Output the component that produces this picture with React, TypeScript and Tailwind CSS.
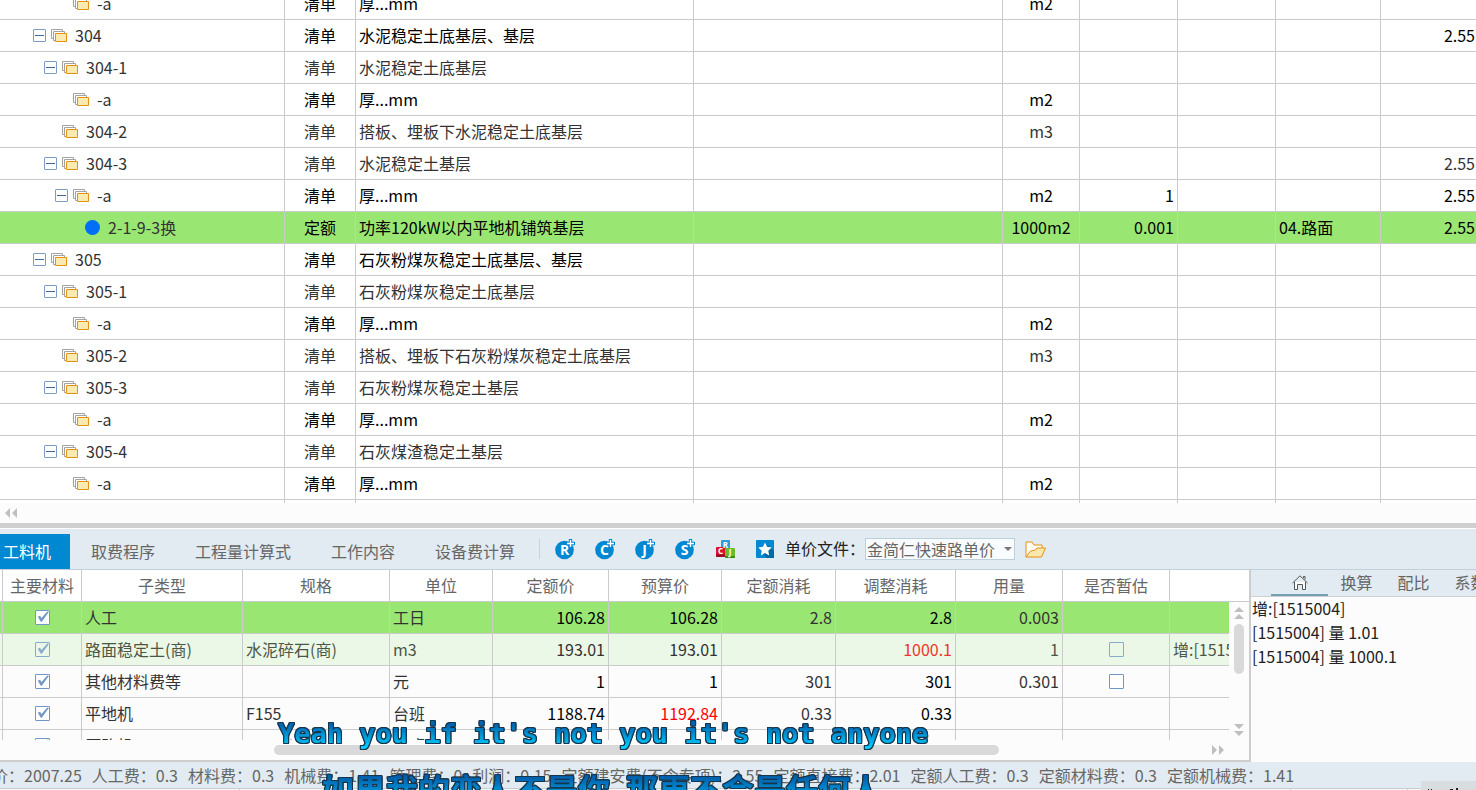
import React from 'react'

type BillRow = {
  level: 1 | 2 | 3 | 4
  open?: boolean
  code: string
  kind: string
  name: string
  unit?: string
  qty?: string
  fee?: string
  price?: string
}

const bills: BillRow[] = [
  { level: 3, code: '-a', kind: '清单', name: '厚...mm', unit: 'm2' },
  { level: 1, open: true, code: '304', kind: '清单', name: '水泥稳定土底基层、基层', price: '2.55' },
  { level: 2, open: true, code: '304-1', kind: '清单', name: '水泥稳定土底基层' },
  { level: 3, code: '-a', kind: '清单', name: '厚...mm', unit: 'm2' },
  { level: 2, code: '304-2', kind: '清单', name: '搭板、埋板下水泥稳定土底基层', unit: 'm3' },
  { level: 2, open: true, code: '304-3', kind: '清单', name: '水泥稳定土基层', price: '2.55' },
  { level: 3, open: true, code: '-a', kind: '清单', name: '厚...mm', unit: 'm2', qty: '1', price: '2.55' },
  { level: 4, code: '2-1-9-3换', kind: '定额', name: '功率120kW以内平地机铺筑基层', unit: '1000m2', qty: '0.001', fee: '04.路面', price: '2.55' },
  { level: 1, open: true, code: '305', kind: '清单', name: '石灰粉煤灰稳定土底基层、基层' },
  { level: 2, open: true, code: '305-1', kind: '清单', name: '石灰粉煤灰稳定土底基层' },
  { level: 3, code: '-a', kind: '清单', name: '厚...mm', unit: 'm2' },
  { level: 2, code: '305-2', kind: '清单', name: '搭板、埋板下石灰粉煤灰稳定土底基层', unit: 'm3' },
  { level: 2, open: true, code: '305-3', kind: '清单', name: '石灰粉煤灰稳定土基层' },
  { level: 3, code: '-a', kind: '清单', name: '厚...mm', unit: 'm2' },
  { level: 2, open: true, code: '305-4', kind: '清单', name: '石灰煤渣稳定土基层' },
  { level: 3, code: '-a', kind: '清单', name: '厚...mm', unit: 'm2' },
  { level: 1, code: '', kind: '', name: '' },
]

const indent = { 1: 'pl-[33px]', 2: 'pl-[44px]', 3: 'pl-[55px]', 4: 'pl-[66px]' }

const box = 'h-8 overflow-hidden border-r border-b border-[#cbcbcb] p-0 leading-5 whitespace-nowrap'
const cell = 'h-8 overflow-hidden border-r border-b border-[#cbcbcb] p-0 pb-[2px] leading-5 whitespace-nowrap'
const lastCell = 'h-8 overflow-hidden border-b border-[#cbcbcb] p-0 pb-[2px] leading-5 whitespace-nowrap'

function FolderStack() {
  return (
    <svg width="16" height="13" viewBox="0 0 16 13" fill="#fff" className="shrink-0">
      <path d="M.5.5h11v9H.5z" stroke="#a2a2a2" />
      <path d="M2.500 2.500h11v9h-11z" stroke="#a2a2a2" />
      <path d="M4.500 4.500h11v8h-11z" fill="#f8eab0" stroke="#e8900f" />
    </svg>
  )
}

function BillTable() {
  return (
    <table className="-mt-3 w-full table-fixed border-separate border-spacing-0 text-black">
      <colgroup>
        <col className="w-[285px]" />
        <col className="w-[71px]" />
        <col className="w-[338px]" />
        <col className="w-[309px]" />
        <col className="w-[77px]" />
        <col className="w-[98px]" />
        <col className="w-[98px]" />
        <col className="w-[105px]" />
        <col />
      </colgroup>
      <tbody>
        {bills.map((r, i) => (
          <tr key={i} className={r.level === 4 ? 'bg-[#9ae673]' : r.level === 2 ? 'bg-white text-[#333]' : 'bg-white'}>
            <td className={box}>
              {r.code && (
                <div className={`flex items-center text-[#333] ${indent[r.level]}`}>
                  {r.open ? (
                    <button aria-label={`折叠 ${r.code}`} className="mr-[5px] grid size-[13px] place-items-center rounded-[1px] border border-[#7e9cc0] bg-white">
                      <span className="h-px w-[9px] bg-[#3c6a9c]" />
                    </button>
                  ) : (
                    <span className="mr-[5px] w-[13px]" />
                  )}
                  {r.level === 4 ? (
                    <span className="grid w-4 place-items-center"><span className="size-[15px] rounded-full bg-[#006ef5]" /></span>
                  ) : (
                    <FolderStack />
                  )}
                  <span className="ml-2 pb-[2px]">{r.code}</span>
                </div>
              )}
            </td>
            <td className={`${cell} text-center`}>{r.kind}</td>
            <td className={`${cell} pl-[3px]`}>{r.name}</td>
            <td className={cell} />
            <td className={`${cell} text-center`}>{r.unit}</td>
            <td className={`${cell} pr-[3px] text-right`}>{r.qty}</td>
            <td className={cell} />
            <td className={`${cell} pl-[3px]`}>{r.fee}</td>
            <td className={`${lastCell} pr-px text-right`}>{r.price}</td>
          </tr>
        ))}
      </tbody>
    </table>
  )
}

type Resource = {
  tone: string
  name: string
  spec?: string
  unit: string
  base: string
  budget: string
  quota?: string
  adjusted?: string
  used?: string
  estimate?: boolean
  note?: string
  budgetRed?: boolean
  adjustedRed?: boolean
}

const resources: Resource[] = [
  { tone: 'bg-[#9ae673]', name: '人工', unit: '工日', base: '106.28', budget: '106.28', quota: '2.8', adjusted: '2.8', used: '0.003' },
  { tone: 'bg-[#ebf8e7]', name: '路面稳定土(商)', spec: '水泥碎石(商)', unit: 'm3', base: '193.01', budget: '193.01', adjusted: '1000.1', adjustedRed: true, used: '1', estimate: true, note: '增:[1515004]' },
  { tone: 'bg-[#fcfcfc]', name: '其他材料费等', unit: '元', base: '1', budget: '1', quota: '301', adjusted: '301', used: '0.301', estimate: true },
  { tone: 'bg-[#fcfcfc]', name: '平地机', spec: 'F155', unit: '台班', base: '1188.74', budget: '1192.84', budgetRed: true, quota: '0.33', adjusted: '0.33' },
  { tone: 'bg-[#fcfcfc]', name: '压路机', spec: '3Y-12/15', unit: '台班', base: '587.09', budget: '589.23', quota: '0.36', adjusted: '0.36' },
]

function Tick({ checked, label, soft }: { checked?: boolean; label: string; soft?: boolean }) {
  return (
    <span className={`grid place-items-center ${soft ? 'opacity-80' : ''}`}>
      <input
        type="checkbox"
        aria-label={label}
        defaultChecked={checked}
        className={`col-start-1 row-start-1 size-[15px] appearance-none rounded-[1px] border border-[#6f98c6] ${soft ? '' : 'bg-white'}`}
      />
      {checked && (
        <svg width="15" height="15" viewBox="0 0 15 15" className="pointer-events-none col-start-1 row-start-1" fill="#6f98c6">
          <path d="M2.800 6.800 5 5.800 6.500 8 12.300 1.500 13.800 2 6.800 11.800H5.800z" />
        </svg>
      )}
    </span>
  )
}

function ResourceCols() {
  return (
    <colgroup>
      <col className="w-[3px]" />
      <col className="w-[79px]" />
      <col className="w-[161px]" />
      <col className="w-[147px]" />
      <col className="w-[103px]" />
      <col className="w-[116px]" />
      <col className="w-[113px]" />
      <col className="w-[114px]" />
      <col className="w-[120px]" />
      <col className="w-[107px]" />
      <col className="w-[107px]" />
      <col />
    </colgroup>
  )
}

const heads = ['', '主要材料', '子类型', '规格', '单位', '定额价', '预算价', '定额消耗', '调整消耗', '用量', '是否暂估']

function ResourcePane() {
  return (
    <section className="flex w-[1251px] shrink-0 flex-col border-r-2 border-b-2 border-[#cdcdcd] bg-[#fcfcfc]">
      <table className="w-full shrink-0 table-fixed border-separate border-spacing-0 bg-white text-[#666]">
        <ResourceCols />
        <thead>
          <tr>
            {heads.map((h, i) => (
              <th key={i} className={`${cell} text-center font-normal`}>{h}</th>
            ))}
            <th className={lastCell} />
          </tr>
        </thead>
      </table>
      <div className="flex h-[138px] overflow-hidden">
        <div className="min-w-0 flex-1 overflow-hidden">
          <table className="w-full table-fixed border-separate border-spacing-0 text-[#333]">
            <ResourceCols />
            <tbody>
              {resources.map((r, i) => {
                const ink = r.adjustedRed ? 'text-[#333]' : 'text-black'
                const muted = r.adjustedRed ? 'text-[#4b5548]' : ''
                return (
                  <tr key={i} className={r.tone}>
                    <td className={box} />
                    <td className={box}><Tick checked label={`主要材料 ${r.name}`} soft={i === 1} /></td>
                    <td className={`${cell} pl-[3px] ${muted}`}>{r.name}</td>
                    <td className={`${cell} pl-[3px] ${muted}`}>{r.spec}</td>
                    <td className={`${cell} pl-[3px] ${muted}`}>{r.unit}</td>
                    <td className={`${cell} pr-[3px] text-right ${ink}`}>{r.base}</td>
                    <td className={`${cell} pr-[3px] text-right ${r.budgetRed ? 'text-[#f00]' : ink}`}>{r.budget}</td>
                    <td className={`${cell} pr-[3px] text-right`}>{r.quota}</td>
                    <td className={`${cell} pr-[3px] text-right ${r.adjustedRed ? 'text-[#f0342c]' : ink}`}>{r.adjusted}</td>
                    <td className={`${cell} pr-[3px] text-right ${muted}`}>{r.used}</td>
                    <td className={box}>{r.estimate && <Tick label={`是否暂估 ${r.name}`} soft={i === 1} />}</td>
                    <td className={`${lastCell} pl-[3px] ${muted}`}>{r.note}</td>
                  </tr>
                )
              })}
            </tbody>
          </table>
        </div>
        <div className="flex w-5 shrink-0 flex-col items-center pt-[5px] pb-1">
          <svg width="10" height="12" viewBox="0 0 10 12" fill="#bfbfbf"><path d="M5 0l5 5H0zM5 7l5 5H0z" /></svg>
          <span className="mt-[5px] h-[50px] w-[10px] rounded-full bg-[#d9d9d9]" />
          <svg width="10" height="12" viewBox="0 0 10 12" fill="#bfbfbf" className="mt-auto"><path d="M0 0h10L5 5zM0 7h10l-5 5z" /></svg>
        </div>
      </div>
      <div className="flex h-5 items-center pr-[25px] pl-[274px]">
        <span className="h-[10px] w-[725px] rounded-full bg-[#d9d9d9]" />
        <svg width="12" height="10" viewBox="0 0 12 10" fill="#bfbfbf" className="ml-auto"><path d="M0 0l5 5-5 5zM7 0l5 5-5 5z" /></svg>
      </div>
    </section>
  )
}

function LetterIcon({ letter }: { letter: string }) {
  return (
    <button aria-label={`新增 ${letter}`} className="size-5">
      <svg width="20" height="22" viewBox="0 0 20 22" className="-mt-px">
        <circle cx="9.500" cy="12" r="9.300" fill="#0088d2" />
        <text x="9.500" y="17" textAnchor="middle" fill="#fff" fontSize="14" fontWeight="700" fontFamily="Open Sans, sans-serif">{letter}</text>
        <path d="M15.500 1v9M11 5.500h9" stroke="#0088d2" strokeWidth="3.400" />
        <path d="M15.500 2v7M12 5.500h7" stroke="#fff" strokeWidth="1.400" />
      </svg>
    </button>
  )
}

function Toolbar() {
  return (
    <div className="flex h-[41px] items-end border-b border-[#c2d0da] bg-[#e1ebf1]">
      <nav className="flex h-[35px] text-[#666]">
        <button className="mr-px w-[70px] bg-[#0088d2] pb-[2px] pl-[3px] text-left text-white">工料机</button>
        {['取费程序', '工程量计算式', '工作内容', '设备费计算'].map((t) => (
          <button key={t} className="px-5 pb-[2px]">{t}</button>
        ))}
      </nav>
      <div className="ml-1 flex h-10 items-center">
        <span className="mr-[15px] h-5 w-px bg-[#c9d3da]" />
        <div className="flex items-center gap-5">
          {['R', 'C', 'J', 'S'].map((l) => <LetterIcon key={l} letter={l} />)}
          <button aria-label="人材机">
            <svg width="20" height="20" viewBox="0 0 20 20" fontSize="8" fontWeight="700" fontFamily="Open Sans, sans-serif" fill="#fff" textAnchor="middle">
              <rect x="6" y="1" width="9" height="9" rx="1" fill="#2c9bd8" />
              <rect x="1" y="8" width="9" height="10" rx="1" fill="#d8142a" />
              <path d="M1 15.500h9V17q0 1-1 1H2q-1 0-1-1z" fill="#9c0b1a" />
              <rect x="10" y="9" width="10" height="10" rx="1" fill="#6cbb2c" />
              <path d="M10 17h10v1q0 1-1 1h-8q-1 0-1-1z" fill="#3f8a12" />
              <text x="10.500" y="8.500">R</text>
              <text x="5.500" y="15">C</text>
              <text x="15" y="16">J</text>
            </svg>
          </button>
          <button aria-label="收藏">
            <svg width="20" height="20" viewBox="0 0 20 20">
              <rect x="1" y="1" width="18" height="18" rx="1" fill="#0088d2" />
              <path d="M13 6l6 6v7H12l-5-5z" fill="#006aa8" />
              <path d="M10 3.500l2 4.300 4.700.6-3.400 3.300.8 4.700-4.100-2.300-4.100 2.300.8-4.700-3.400-3.300 4.700-.6z" fill="#fff" />
            </svg>
          </button>
        </div>
        <label htmlFor="price-file" className="ml-[10px] w-20 pb-[2px] text-[#222]">单价文件：</label>
        <div className="grid items-center">
          <select id="price-file" className="col-start-1 row-start-1 h-[22px] w-[150px] appearance-none border border-[#bccfdc] bg-[#f8fcfe] pl-px leading-5 text-[#666]">
            <option>金简仁快速路单价</option>
          </select>
          <svg width="8" height="4" viewBox="0 0 8 4" fill="#777" className="pointer-events-none col-start-1 row-start-1 mr-[3px] justify-self-end"><path d="M0 0h8L4 4z" /></svg>
        </div>
        <button aria-label="打开" className="ml-[10px]">
          <svg width="21" height="17" viewBox="0 0 21 17" strokeLinejoin="round" stroke="#e8900f">
            <path d="M1 16V1h6l2 3h8v4" fill="#fffdf5" />
            <path d="M1 16 5.500 10l5-1 1.500-2h8.500L16.500 16z" fill="#f8e8ae" />
          </svg>
        </button>
      </div>
    </div>
  )
}

function NotePane() {
  return (
    <section className="min-w-0 flex-1 overflow-hidden bg-[#fcfcfc]">
      <nav className="flex h-[27px] border-b border-[#d0d0d0] bg-[#e1ebf1] pl-5 text-[#666]">
        <button aria-label="主页" className="grid w-[57px] shrink-0 place-items-center border-b-2 border-[#769fb4]">
          <svg width="16" height="15" viewBox="0 0 16 15" fill="#fff" stroke="#555">
            <path d="M2.500 7v7.500h3v-5h5v5h3V7" />
            <path d="M.5 8 8 .8 15.500 8M11.500 3V1.500h1.500v3" fill="none" />
          </svg>
        </button>
        {['换算', '配比', '系数'].map((t) => (
          <button key={t} className="w-[57px] shrink-0 pb-[2px]">{t}</button>
        ))}
      </nav>
      <div className="-mt-px pl-px leading-6 text-[#222]">
        <p>增:[1515004]</p>
        <p>[1515004] 量 1.01</p>
        <p>[1515004] 量 1000.1</p>
      </div>
    </section>
  )
}

const totals = [
  ['价', '2007.25'],
  ['人工费', '0.3'],
  ['材料费', '0.3'],
  ['机械费', '1.41'],
  ['管理费', '0'],
  ['利润', '0.15'],
  ['定额建安费(不含专项)', '2.55'],
  ['定额直接费', '2.01'],
  ['定额人工费', '0.3'],
  ['定额材料费', '0.3'],
  ['定额机械费', '1.41'],
]

const lyric = 'bg-linear-to-b from-20% to-90% bg-clip-text text-transparent whitespace-pre [filter:drop-shadow(1px_0_0_#17364d)_drop-shadow(-1px_0_0_#17364d)_drop-shadow(0_1px_0_#17364d)_drop-shadow(0_-1px_0_#17364d)]'

export default function App() {
  return (
    <main className="relative flex h-screen flex-col overflow-hidden bg-white font-['Noto_Sans_CJK_SC',sans-serif] text-base leading-5">
      <div className="min-h-0 flex-1 overflow-hidden">
        <BillTable />
      </div>
      <div className="flex h-5 shrink-0 items-center bg-[#fcfcfc] pl-[5px]">
        <svg width="12" height="10" viewBox="0 0 12 10" fill="#bfbfbf"><path d="M5 0v10L0 5zM12 0v10L7 5z" /></svg>
      </div>
      <div className="h-[6px] shrink-0 border-b border-white bg-[#cfcfcf]" />
      <Toolbar />
      <div className="flex shrink-0">
        <ResourcePane />
        <NotePane />
      </div>
      <footer className="shrink-0 bg-[#e1ebf1] text-[#666]">
        <div className="-ml-2 flex h-[26px] items-center gap-[10px] whitespace-nowrap">
          {totals.map(([k, v]) => <span key={k}>{k}：{v}</span>)}
        </div>
        <div className="flex h-[2px] border-t border-[#c8cdd0] bg-[#f7f8f8]">
          <span className="w-60 border-r border-[#c8cdd0]" />
          <span className="w-[1051px] border-r border-[#c8cdd0]" />
          <span className="w-[117px] border-r border-[#c8cdd0]" />
        </div>
      </footer>
      <div className="absolute right-0 bottom-0 h-[9px] w-[55px] bg-[#d9dde0]">
        <svg width="55" height="9" viewBox="0 0 55 9" fill="#222"><path d="M7 8h1v1H7zM10 8h1v1h-1zM29 8h3v1h-3zM35 7h2v2h-2z" /></svg>
      </div>
      <p className={`absolute bottom-10 left-[278px] from-[#0064b0] to-[#00ccff] font-['DejaVu_Sans_Mono',monospace] text-[27px] leading-8 font-bold ${lyric}`}>Yeah you if it's not you it's not anyone</p>
      <p className={`absolute -bottom-4 left-[322px] from-[#0060ac] to-[#00b8f4] text-[32px] leading-9 font-bold ${lyric}`}>如果我的恋人不是你&ensp;那更不会是任何人</p>
    </main>
  )
}
